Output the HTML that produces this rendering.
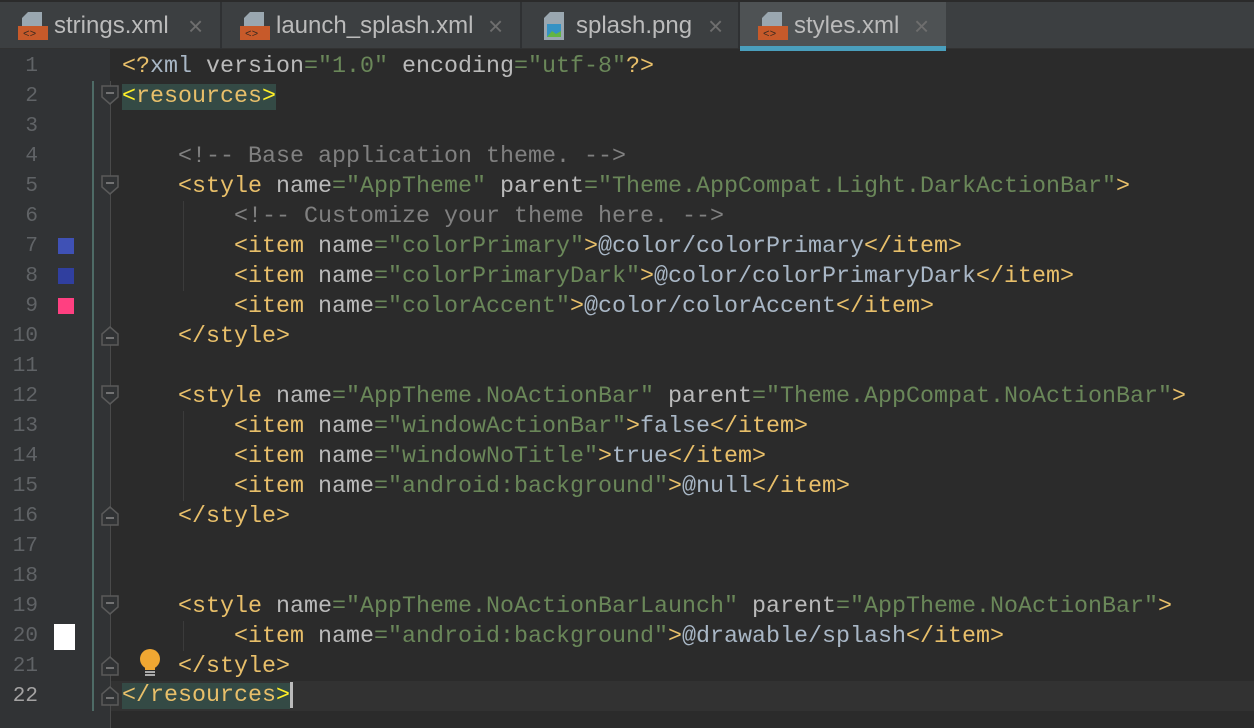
<!DOCTYPE html>
<html><head><meta charset="utf-8"><style>
body{margin:0;width:1254px;height:728px;overflow:hidden;background:#2b2b2b;font-family:"Liberation Mono",monospace;position:relative}
#tabs{position:absolute;left:0;top:0;width:1254px;height:49px;background:#3c3f41;border-top:2px solid #2b2b2b;box-sizing:border-box;border-bottom:1px solid #323232}
.tab{position:absolute;top:0;height:47px;font-family:"Liberation Sans",sans-serif;font-size:24px;color:#bbbbbb;line-height:48px;border-right:2px solid #2f3133;box-sizing:border-box}
.tab .x{position:absolute;top:0;color:#6e6e6e;font-size:26px}
.ic{position:absolute;top:8px}
#gut{position:absolute;left:0;top:49px;width:110px;height:679px;background:#313335}
.ln{position:absolute;left:0;width:38px;text-align:right;font-size:21px;color:#606366;line-height:30px}
.l{position:absolute;left:122px;font-size:23.33px;line-height:30px;white-space:pre;color:#a9b7c6;margin-top:1px}
.t{color:#e8bf6a}.a{color:#bababa}.v{color:#6a8759}.c{color:#808080}
.hl{background:#344a45}
.sw{position:absolute;left:58px;width:16px;height:16px}
.g{position:absolute;left:183px;width:1px;background:#3b3b3b}
</style></head><body>
<div id="tabs">
<div class="tab" style="left:0;width:222px"><svg class="ic" style="left:18px" width="30" height="30"><path d="M10 2h14v14H4V8z" fill="#9aa7b0"/><rect x="0" y="16" width="30" height="14" fill="#c75a2a"/><text x="5" y="27" font-size="11" fill="#3a2a20" font-family="Liberation Mono">&lt;&gt;</text></svg><span style="position:absolute;left:54px">strings.xml</span><span class="x" style="left:188px">×</span></div>
<div class="tab" style="left:222px;width:300px"><svg class="ic" style="left:18px" width="30" height="30"><path d="M10 2h14v14H4V8z" fill="#9aa7b0"/><rect x="0" y="16" width="30" height="14" fill="#c75a2a"/><text x="5" y="27" font-size="11" fill="#3a2a20" font-family="Liberation Mono">&lt;&gt;</text></svg><span style="position:absolute;left:54px">launch_splash.xml</span><span class="x" style="left:266px">×</span></div>
<div class="tab" style="left:522px;width:218px"><svg class="ic" style="left:22px" width="22" height="32"><path d="M6 2h14v28H0V8z" fill="#9aa7b0"/><rect x="3" y="14" width="14" height="13" fill="#3592c4"/><path d="M3 27l5-6 4 3 5-3v6z" fill="#62b543"/></svg><span style="position:absolute;left:54px">splash.png</span><span class="x" style="left:186px">×</span></div>
<div class="tab" style="left:740px;width:206px;background:#4e5254;border-right:none"><svg class="ic" style="left:18px" width="30" height="30"><path d="M10 2h14v14H4V8z" fill="#9aa7b0"/><rect x="0" y="16" width="30" height="14" fill="#c75a2a"/><text x="5" y="27" font-size="11" fill="#3a2a20" font-family="Liberation Mono">&lt;&gt;</text></svg><span style="position:absolute;left:54px">styles.xml</span><span class="x" style="left:174px">×</span><div style="position:absolute;left:0;bottom:-2px;width:206px;height:5px;background:#4a9fbd"></div></div>
</div>
<div id="gut"></div>
<div style="position:absolute;left:110px;top:681px;width:1144px;height:30px;background:#323232"></div>
<div style="position:absolute;left:92px;top:81px;width:2px;height:630px;background:#4e6b66"></div>
<div style="position:absolute;left:110px;top:81px;width:1px;height:647px;background:#4a4a4a"></div>
<svg style="position:absolute;left:100px;top:49px" width="22" height="679">
<g fill="#313335" stroke="#5a5a5a" stroke-width="1.5">
<path d="M2 37h16v11l-8 7l-8-7z"/><path d="M2 127h16v11l-8 7l-8-7z"/><path d="M2 337h16v11l-8 7l-8-7z"/><path d="M2 547h16v11l-8 7l-8-7z"/>
<path d="M2 296v-11l8-7l8 7v11z"/><path d="M2 476v-11l8-7l8 7v11z"/><path d="M2 626v-11l8-7l8 7v11z"/><path d="M2 656v-11l8-7l8 7v11z"/>
</g><g stroke="#888" stroke-width="1.5"><path d="M6 44h8M6 134h8M6 344h8M6 554h8M6 289h8M6 469h8M6 619h8M6 649h8"/></g></svg>
<div class="g" style="top:201px;height:90px"></div><div class="g" style="top:411px;height:90px"></div><div class="g" style="top:621px;height:30px"></div>
<div class="sw" style="top:238px;background:#3f51b5"></div><div class="sw" style="top:268px;background:#303f9f"></div><div class="sw" style="top:298px;background:#ff4081"></div>
<div class="sw" style="top:624px;left:54px;width:21px;height:26px;background:#fff"></div>
<svg style="position:absolute;left:138px;top:649px" width="24" height="30"><circle cx="12" cy="10" r="10" fill="#f0a732"/><rect x="7" y="17" width="10" height="4" fill="#f0a732"/><rect x="7" y="22" width="10" height="2" fill="#aaa"/><rect x="7" y="25" width="10" height="2" fill="#aaa"/></svg>
<div class="ln" style="top:52px">1</div><div class="ln" style="top:82px">2</div><div class="ln" style="top:112px">3</div><div class="ln" style="top:142px">4</div><div class="ln" style="top:172px">5</div><div class="ln" style="top:202px">6</div><div class="ln" style="top:232px">7</div><div class="ln" style="top:262px">8</div><div class="ln" style="top:292px">9</div><div class="ln" style="top:322px">10</div><div class="ln" style="top:352px">11</div><div class="ln" style="top:382px">12</div><div class="ln" style="top:412px">13</div><div class="ln" style="top:442px">14</div><div class="ln" style="top:472px">15</div><div class="ln" style="top:502px">16</div><div class="ln" style="top:532px">17</div><div class="ln" style="top:562px">18</div><div class="ln" style="top:592px">19</div><div class="ln" style="top:622px">20</div><div class="ln" style="top:652px">21</div><div class="ln" style="top:682px;color:#a4a3a3">22</div>
<div class="l" style="top:51px"><span class="t">&lt;?</span>xml <span class="a">version</span><span class="v">="1.0"</span> <span class="a">encoding</span><span class="v">="utf-8"</span><span class="t">?&gt;</span></div>
<div class="l" style="top:81px"><span class="t hl"><span style="color:#ffef28">&lt;</span>resources<span style="color:#ffef28">&gt;</span></span></div>
<div class="l c" style="top:141px">    &lt;!-- Base application theme. --&gt;</div>
<div class="l" style="top:171px">    <span class="t">&lt;style </span><span class="a">name</span><span class="v">="AppTheme"</span> <span class="a">parent</span><span class="v">="Theme.AppCompat.Light.DarkActionBar"</span><span class="t">&gt;</span></div>
<div class="l c" style="top:201px">        &lt;!-- Customize your theme here. --&gt;</div>
<div class="l" style="top:231px">        <span class="t">&lt;item </span><span class="a">name</span><span class="v">="colorPrimary"</span><span class="t">&gt;</span>@color/colorPrimary<span class="t">&lt;/item&gt;</span></div>
<div class="l" style="top:261px">        <span class="t">&lt;item </span><span class="a">name</span><span class="v">="colorPrimaryDark"</span><span class="t">&gt;</span>@color/colorPrimaryDark<span class="t">&lt;/item&gt;</span></div>
<div class="l" style="top:291px">        <span class="t">&lt;item </span><span class="a">name</span><span class="v">="colorAccent"</span><span class="t">&gt;</span>@color/colorAccent<span class="t">&lt;/item&gt;</span></div>
<div class="l" style="top:321px">    <span class="t">&lt;/style&gt;</span></div>
<div class="l" style="top:381px">    <span class="t">&lt;style </span><span class="a">name</span><span class="v">="AppTheme.NoActionBar"</span> <span class="a">parent</span><span class="v">="Theme.AppCompat.NoActionBar"</span><span class="t">&gt;</span></div>
<div class="l" style="top:411px">        <span class="t">&lt;item </span><span class="a">name</span><span class="v">="windowActionBar"</span><span class="t">&gt;</span>false<span class="t">&lt;/item&gt;</span></div>
<div class="l" style="top:441px">        <span class="t">&lt;item </span><span class="a">name</span><span class="v">="windowNoTitle"</span><span class="t">&gt;</span>true<span class="t">&lt;/item&gt;</span></div>
<div class="l" style="top:471px">        <span class="t">&lt;item </span><span class="a">name</span><span class="v">="android:background"</span><span class="t">&gt;</span>@null<span class="t">&lt;/item&gt;</span></div>
<div class="l" style="top:501px">    <span class="t">&lt;/style&gt;</span></div>
<div class="l" style="top:591px">    <span class="t">&lt;style </span><span class="a">name</span><span class="v">="AppTheme.NoActionBarLaunch"</span> <span class="a">parent</span><span class="v">="AppTheme.NoActionBar"</span><span class="t">&gt;</span></div>
<div class="l" style="top:621px">        <span class="t">&lt;item </span><span class="a">name</span><span class="v">="android:background"</span><span class="t">&gt;</span>@drawable/splash<span class="t">&lt;/item&gt;</span></div>
<div class="l" style="top:651px">    <span class="t">&lt;/style&gt;</span></div>
<div class="l" style="top:680px"><span class="t hl">&lt;/resources<span style="color:#ffef28">&gt;</span></span><span style="display:inline-block;width:3px;height:26px;background:#bbb;vertical-align:middle"></span></div>
</body></html>
